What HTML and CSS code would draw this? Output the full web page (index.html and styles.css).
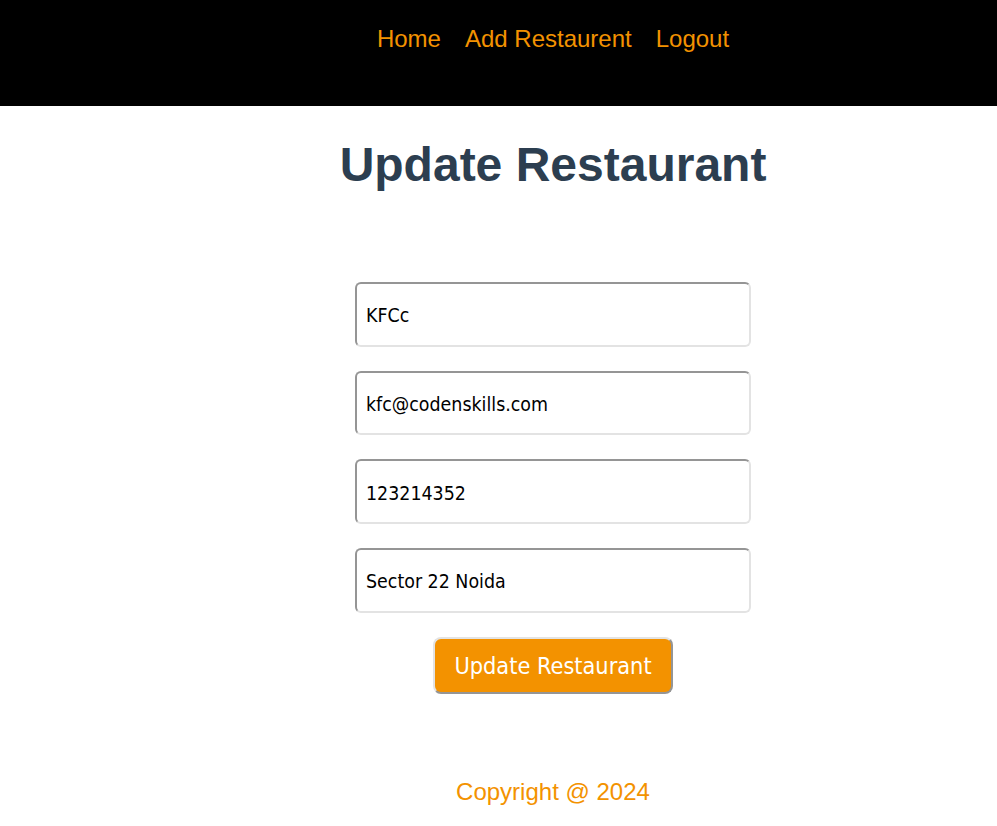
FILE: index.html
```html
<!DOCTYPE html>
<html>
<head>
<meta charset="utf-8">
<title>Update Restaurant</title>
<link rel="stylesheet" href="styles.css">
</head>
<body>
<header class="topbar">
  <nav class="nav">
    <a class="nav-link" href="#">Home</a>
    <a class="nav-link" href="#">Add Restaurent</a>
    <a class="nav-link" href="#">Logout</a>
  </nav>
</header>
<main class="page">
  <h1 class="title">Update Restaurant</h1>
  <form class="form">
    <input class="field" type="text" value="KFCc">
    <input class="field" type="text" value="kfc@codenskills.com">
    <input class="field" type="text" value="123214352">
    <input class="field" type="text" value="Sector 22 Noida">
    <button class="submit" type="button">Update Restaurant</button>
  </form>
  <footer class="footer">Copyright @ 2024</footer>
</main>
</body>
</html>
```
FILE: styles.css
```css
html, body {
  margin: 0;
  padding: 0;
  background: #fff;
  font-family: "Liberation Sans", Arial, sans-serif;
}

.topbar {
  background: #000;
  height: 106px;
  box-sizing: border-box;
  padding: 25px 0 0 109px;
}

.nav {
  display: flex;
  justify-content: center;
  gap: 24px;
}

.nav-link {
  color: #f39200;
  text-decoration: none;
  font-size: 24px;
  line-height: 28px;
}

.page {
  padding-left: 109px;
  display: flex;
  flex-direction: column;
  align-items: center;
}

.title {
  margin: 31px 0 0;
  font-size: 48px;
  font-weight: bold;
  color: #2c3e50;
  line-height: 55px;
}

.form {
  margin-top: 90px;
  display: flex;
  flex-direction: column;
  align-items: center;
  gap: 24.2px;
}

.field {
  box-sizing: border-box;
  width: 396px;
  height: 64.5px;
  padding: 3px 9px 0;
  border-width: 2px;
  border-style: solid;
  border-color: #959595 #e3e3e3 #e3e3e3 #959595;
  border-radius: 6px;
  font-family: "DejaVu Sans Condensed", "DejaVu Sans", sans-serif;
  font-size: 19.4px;
  color: #000;
  background: #fff;
  outline: none;
}

.submit {
  box-sizing: border-box;
  width: 240px;
  height: 57px;
  background: #f39200;
  color: #fff;
  border-width: 2px;
  border-style: solid;
  border-color: #e3e3e3 #959595 #959595 #e3e3e3;
  border-radius: 8px;
  font-family: "DejaVu Sans Condensed", "DejaVu Sans", sans-serif;
  font-size: 23.3px;
  padding: 0;
  cursor: pointer;
}

.footer {
  margin-top: 84px;
  color: #f39200;
  font-size: 24px;
  line-height: 28px;
}
```
